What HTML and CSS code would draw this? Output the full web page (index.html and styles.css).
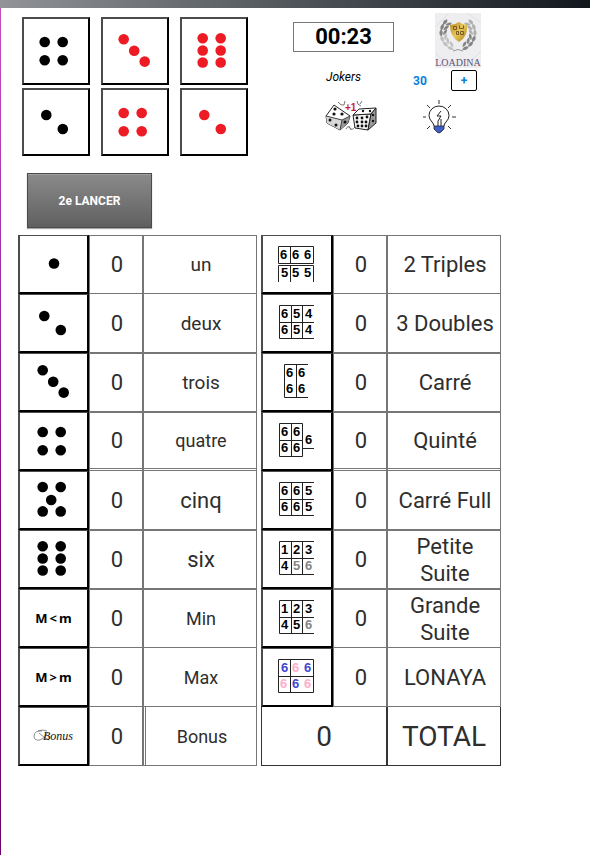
FILE: index.html
```html
<!DOCTYPE html>
<html lang="fr">
<head>
<meta charset="utf-8">
<meta name="viewport" content="width=device-width, initial-scale=1">
<title>Lonaya</title>
<link rel="stylesheet" href="styles.css">
</head>
<body>
<svg class="defs" aria-hidden="true">
  <defs>
    <symbol id="p1" viewBox="-20 -20 40 40"><circle cx="0" cy="-.5" r="5.3"/></symbol>
    <symbol id="p2" viewBox="-20 -20 40 40"><circle cx="-9.7" cy="-7" r="5.3"/><circle cx="6.8" cy="7" r="5.3"/></symbol>
    <symbol id="p3" viewBox="-20 -20 40 40"><circle cx="-11.3" cy="-11.7" r="5.3"/><circle cx="-.8" cy="-.2" r="5.3"/><circle cx="9.7" cy="10.6" r="5.3"/></symbol>
    <symbol id="p4" viewBox="-20 -20 40 40"><circle cx="-11.3" cy="-9" r="5.3"/><circle cx="6.7" cy="-9" r="5.3"/><circle cx="-11.3" cy="9.2" r="5.3"/><circle cx="6.7" cy="9.2" r="5.3"/></symbol>
    <symbol id="p5" viewBox="-20 -20 40 40"><circle cx="-11.3" cy="-13" r="5.3"/><circle cx="6.7" cy="-13" r="5.3"/><circle cx="-2.8" cy="0" r="5.3"/><circle cx="-11.3" cy="11.4" r="5.3"/><circle cx="6.7" cy="11.4" r="5.3"/></symbol>
    <symbol id="p6" viewBox="-20 -20 40 40"><circle cx="-11.3" cy="-12.7" r="5.3"/><circle cx="6.7" cy="-12.7" r="5.3"/><circle cx="-11.3" cy="-.5" r="5.3"/><circle cx="6.7" cy="-.5" r="5.3"/><circle cx="-11.3" cy="11.5" r="5.3"/><circle cx="6.7" cy="11.5" r="5.3"/></symbol>
    <symbol id="grid" viewBox="0 0 36 36"><path fill="none" stroke="#222" d="M36 .5H1.5V33.5H36M1.5 17.5H36M13.5 .5V33.5M24.5 .5V33.5"/></symbol>
    <g id="leaves"><path d="M23 37q-4-4-7-1q3 4 7 1zM22 35q-1-5-5-5q0 4 5 5z"/></g>
    <linearGradient id="gold" x1="0" x2="1" y1="0" y2="1"><stop offset="0" stop-color="#b8861e"/><stop offset=".5" stop-color="#e8c85e"/><stop offset="1" stop-color="#a87a14"/></linearGradient>
  </defs>
</svg>

<div class="topbar"></div>
<main class="page">
  <header class="head">
    <div class="dice">
      <button class="die" aria-label="Dé 4"><svg class="pips"><use href="#p4"/></svg></button>
      <button class="die red" aria-label="Dé 3"><svg class="pips"><use href="#p3"/></svg></button>
      <button class="die red" aria-label="Dé 6"><svg class="pips"><use href="#p6"/></svg></button>
      <button class="die" aria-label="Dé 2"><svg class="pips"><use href="#p2"/></svg></button>
      <button class="die red" aria-label="Dé 4"><svg class="pips"><use href="#p4"/></svg></button>
      <button class="die red" aria-label="Dé 2"><svg class="pips"><use href="#p2"/></svg></button>
    </div>

    <div class="info">
      <div class="timer">00:23</div>
      <svg class="logo" viewBox="0 0 46 55" role="img" aria-label="Loadina">
        <rect width="46" height="55" fill="#eeeef0"/>
        <path d="M0 14L14 0M32 0L46 10M0 40L10 48M36 48L46 38" stroke="#e0e0e4" fill="none"/>
        <g fill="#c0c0c0">
          <use href="#leaves" transform="rotate(14 23 20)"/><use href="#leaves" transform="rotate(36 23 20)"/><use href="#leaves" transform="rotate(57 23 20)"/>
          <g fill="#848484"><use href="#leaves" transform="rotate(78 23 20)"/><use href="#leaves" transform="rotate(98 23 20)"/><use href="#leaves" transform="rotate(118 23 20)"/></g>
        </g>
        <g transform="matrix(-1 0 0 1 46 0)" fill="#858585">
          <use href="#leaves" transform="rotate(14 23 20)"/><use href="#leaves" transform="rotate(36 23 20)"/><use href="#leaves" transform="rotate(57 23 20)"/>
          <g fill="#b0b0b0"><use href="#leaves" transform="rotate(78 23 20)"/><use href="#leaves" transform="rotate(98 23 20)"/><use href="#leaves" transform="rotate(118 23 20)"/></g>
        </g>
        <path d="M18 38q5-3 10 0" fill="none" stroke="#999"/>
        <path d="M15 12q5 0 9-3q4 3 8 3q1 12-8 17q-9-5-9-17z" fill="url(#gold)"/>
        <path d="M18.500 13.500h3v3h-3zM24.500 12.500v3h4v-3M21.500 18.500h2v3h-2zM25.500 18.500h3v3h-3z" fill="none" stroke="#7a5c20"/>
        <text class="logo-text" x="23" y="53" text-anchor="middle">LOADINA</text>
      </svg>
      <div class="jokers">Jokers</div>
      <div class="credit">
        <span class="count">30</span>
        <button class="plus">+</button>
      </div>
      <button class="tool tool-dice" aria-label="Joker dés">
        <svg width="52" height="34" viewBox="0 0 52 34">
          <g fill="none" stroke="#777"><path d="M13 2q3 4 6 3l1-4M32 1q0 4 4 5M37 1l-2 3M21 29q2-4 4-1t5-1M24 26l2 4"/></g>
          <path d="M1 16L9 5 25 16 23 23 15 30 2 23z" fill="#fff" stroke="#222" stroke-linejoin="round"/>
          <path d="M25 16L23 23 15 30 17 20z" fill="#999"/>
          <path d="M1 16L17 20 15 30 2 23z" fill="#d8d8d8"/>
          <path d="M1 16L17 20 25 16M17 20L15 30" fill="none" stroke="#444"/>
          <g fill="#111"><circle cx="10" cy="9" r="1.6"/><circle cx="17" cy="14" r="1.6"/><circle cx="9" cy="14" r="1.6"/><circle cx="5" cy="20" r="1.5"/><circle cx="11" cy="25" r="1.5"/><circle cx="20" cy="22" r="1.500"/></g>
          <path d="M28 15L46 14 43 30 30 28z" fill="#f5f5f5" stroke="#222"/>
          <path d="M28 15L34 9 51 8 46 14z" fill="#fff" stroke="#222"/>
          <path d="M46 14L51 8 51 23 43 30z" fill="#999" stroke="#222"/>
          <g fill="#111"><circle cx="32" cy="18" r="1.400"/><circle cx="37" cy="18" r="1.400"/><circle cx="42" cy="17" r="1.400"/><circle cx="32" cy="22" r="1.400"/><circle cx="37" cy="22" r="1.400"/><circle cx="41" cy="22" r="1.400"/><circle cx="33" cy="26" r="1.400"/><circle cx="37" cy="26" r="1.400"/><circle cx="41" cy="26" r="1.400"/><circle cx="48" cy="15" r="1.200"/><circle cx="48" cy="21" r="1.200"/><circle cx="38" cy="11" r="1.200"/><circle cx="45" cy="11" r="1.200"/></g>
          <text class="bonus-one" x="20" y="11">+1</text>
        </svg>
      </button>
      <button class="tool tool-bulb" aria-label="Indice">
        <svg width="33" height="34" viewBox="0 0 33 34">
          <path d="M11 26q0-2-2-4Q6 19 6 15.500a10 9.500 0 0 1 20 0Q26 19 23 22q-2 2-2 4" fill="#fff" stroke="#222"/>
          <path d="M16 0v4M4 5l3 3M28 5l-3 3M0 17h3M29 17h4M4 29l3-3M28 29l-3-3" stroke="#333" fill="none"/>
          <path d="M18 11l-4 5h4l-3 5M15 21v5M18 19v7" stroke="#222" fill="none"/>
          <path d="M11 26h10v3l-3 3q-2 2-4 0l-3-3z" fill="#3f5fc4" stroke="#223" stroke-width=".8"/>
        </svg>
      </button>
    </div>
  </header>

  <button class="roll">2e LANCER</button>

  <section class="board">
    <table class="scores">
      <colgroup><col class="c-pic"><col class="c-val"><col></colgroup>
      <tr><th class="pic"><svg class="pips"><use href="#p1"/></svg></th><td>0</td><td class="medium">un</td></tr>
      <tr class="thin"><th class="pic"><svg class="pips"><use href="#p2"/></svg></th><td>0</td><td class="medium">deux</td></tr>
      <tr><th class="pic"><svg class="pips"><use href="#p3"/></svg></th><td>0</td><td class="medium">trois</td></tr>
      <tr class="split"><th class="pic"><svg class="pips"><use href="#p4"/></svg></th><td>0</td><td class="small">quatre</td></tr>
      <tr class="thin"><th class="pic"><svg class="pips"><use href="#p5"/></svg></th><td>0</td><td>cinq</td></tr>
      <tr><th class="pic"><svg class="pips"><use href="#p6"/></svg></th><td>0</td><td>six</td></tr>
      <tr><th class="pic"><span class="rule"><span>M</span><span>&lt;</span><span>m</span></span></th><td>0</td><td class="small">Min</td></tr>
      <tr class="thin"><th class="pic"><span class="rule"><span>M</span><span>&gt;</span><span>m</span></span></th><td>0</td><td class="small">Max</td></tr>
      <tr class="thin"><th class="pic"><svg width="42" height="16" viewBox="0 0 42 16"><path d="M9 3Q2 2 1 8Q1 13 7 12Q12 11 15 4M6 5Q10 9 16 12M5 3Q9 1 14 3" fill="none" stroke="#444" stroke-width=".6"/><text class="script" x="10" y="12">Bonus</text></svg></th><td>0</td><td class="small divide">Bonus</td></tr>
    </table>

    <table class="scores">
      <colgroup><col class="c-pic wide"><col class="c-val"><col></colgroup>
      <tr><th class="pic"><svg class="combo" viewBox="0 0 36 36"><path d="M.5 .5H35.500V17.500H.5zM12.500 .5V17.500M.5 36V19.500H35.500V36M12.500 19.500V36"/><text x="2" y="13">6</text><text x="14" y="13">6</text><text x="26" y="13">6</text><text x="3" y="31">5</text><text x="14" y="31">5</text><text x="26" y="31">5</text></svg></th><td>0</td><td>2 Triples</td></tr>
      <tr class="thin"><th class="pic"><svg class="combo" viewBox="0 0 36 36"><use href="#grid"/><text x="3" y="13">6</text><text x="15" y="13">5</text><text x="27" y="13">4</text><text x="3" y="29">6</text><text x="15" y="29">5</text><text x="27" y="29">4</text></svg></th><td>0</td><td>3 Doubles</td></tr>
      <tr><th class="pic"><svg class="combo" viewBox="0 0 36 36"><path d="M30 .5H6.500V33.500H30M18.500 .5V33.500"/><text x="8" y="13">6</text><text x="20" y="13">6</text><text x="8" y="29">6</text><text x="20" y="29">6</text></svg></th><td>0</td><td>Carré</td></tr>
      <tr class="split"><th class="pic"><svg class="combo" viewBox="0 0 36 36"><path d="M1.500 .5H24.500V33.500H1.500zM1.500 17.500H24.500M13.500 .5V33.500M24.500 25.500H36"/><text x="3" y="13">6</text><text x="15" y="13">6</text><text x="3" y="29">6</text><text x="15" y="29">6</text><text x="27" y="21">6</text></svg></th><td>0</td><td>Quinté</td></tr>
      <tr class="thin"><th class="pic"><svg class="combo" viewBox="0 0 36 36"><use href="#grid"/><text x="3" y="13">6</text><text x="15" y="13">6</text><text x="27" y="13">5</text><text x="3" y="29">6</text><text x="15" y="29">6</text><text x="27" y="29">5</text></svg></th><td>0</td><td>Carré Full</td></tr>
      <tr><th class="pic"><svg class="combo" viewBox="0 0 36 36"><use href="#grid"/><text x="3" y="13">1</text><text x="15" y="13">2</text><text x="27" y="13">3</text><text x="3" y="29">4</text><text class="dim" x="15" y="29">5</text><text class="dim" x="27" y="29">6</text></svg></th><td>0</td><td>Petite<br>Suite</td></tr>
      <tr><th class="pic"><svg class="combo" viewBox="0 0 36 36"><use href="#grid"/><text x="3" y="13">1</text><text x="15" y="13">2</text><text x="27" y="13">3</text><text x="3" y="29">4</text><text x="15" y="29">5</text><text class="dim" x="27" y="29">6</text></svg></th><td>0</td><td>Grande<br>Suite</td></tr>
      <tr class="thin"><th class="pic"><svg class="combo" viewBox="0 0 36 36"><path d="M.5 .5H35.500V33.500H.5zM.5 17.500H35.500M12.500 .5V33.500"/><text class="blue" x="3" y="13">6</text><text class="pink" x="14" y="13">6</text><text class="blue" x="26" y="13">6</text><text class="pink" x="2" y="29">6</text><text class="blue" x="14" y="29">6</text><text class="pink" x="26" y="29">6</text></svg></th><td>0</td><td>LONAYA</td></tr>
      <tr class="thin total"><td colspan="2">0</td><td>TOTAL</td></tr>
    </table>
  </section>
</main>
</body>
</html>
```
FILE: styles.css
```css
* { box-sizing: border-box; }

body {
  margin: 0;
  min-height: 100vh;
  display: flex;
  flex-direction: column;
  background: #fff;
  color: #2e2e2e;
  font-family: Roboto, "Liberation Sans", sans-serif;
}

button {
  margin: 0;
  padding: 0;
  font-family: inherit;
  cursor: pointer;
}

svg { display: block; }

.defs { position: absolute; width: 0; height: 0; }

.topbar {
  height: 8px;
  background: linear-gradient(90deg, #919398, #565b60 45%, #12161d);
}

.page {
  flex: 1;
  padding: 5px 0 16px 17px;
  border-left: 1px solid;
  border-image: linear-gradient(#c050c0, #a030a8 30%, #780878 65%, #6c046c) 1;
}

.head {
  display: flex;
  align-items: flex-start;
  gap: 45px;
}

.dice {
  display: grid;
  grid-template-columns: repeat(3, 68px);
  gap: 3px 11px;
  padding: 4px 0 0 4px;
}

.die {
  display: grid;
  place-items: center;
  height: 68px;
  background: #fff;
  border: 2px solid #000;
  border-top-color: #4c4c4c;
  border-left-color: #4c4c4c;
}

.pips {
  width: 40px;
  height: 40px;
  margin: 0 auto;
  fill: #000;
}

.red .pips { fill: #ed1c24; }

.info {
  display: grid;
  grid-template-columns: 101px 71px;
  grid-template-rows: 55px 25px auto;
  column-gap: 16px;
}

.timer {
  align-self: center;
  height: 30px;
  margin-bottom: 7px;
  border: 1px solid #767676;
  color: #000;
  font-size: 22px;
  font-weight: 700;
  line-height: 28px;
  text-align: center;
}

.logo {
  width: 46px;
  height: 55px;
  justify-self: end;
}

.logo-text {
  font: 10px "Liberation Serif", serif;
  fill: #5c5478;
}

.jokers {
  color: #000;
  font-size: 12px;
  font-style: italic;
  line-height: 18px;
  text-align: center;
}

.credit {
  display: flex;
  justify-content: space-between;
  align-items: center;
  padding: 0 4px 0 3px;
}

.count, .plus {
  color: #0a7fd9;
  font-size: 12px;
  font-weight: 700;
}

.plus {
  width: 26px;
  height: 21px;
  background: #fff;
  border: 1px solid #000;
  border-radius: 2px;
}

.tool {
  margin-top: 7px;
  border: 0;
  background: none;
}

.tool-dice { justify-self: end; margin-right: 17px; }
.tool-bulb { justify-self: start; margin-left: 13px; }

.bonus-one {
  font: 700 10px "Liberation Sans", sans-serif;
  fill: #c8202c;
}

.roll {
  display: block;
  width: 125px;
  height: 55px;
  margin: 17px 0 7px 9px;
  border: 1px solid #4a4a4a;
  background: linear-gradient(#8a8a8a, #606060);
  box-shadow: inset 0 1px #a0a0a0, 0 1px 1px #aaa;
  color: #fff;
  font-size: 12px;
  font-weight: 700;
}

.board {
  display: grid;
  grid-template-columns: minmax(0, 239px) minmax(0, 240px);
  align-items: start;
  gap: 4px;
}

.scores {
  width: 100%;
  table-layout: fixed;
  border-collapse: separate;
  border-spacing: 0;
}

.c-pic { width: 71px; }
.c-pic.wide { width: 72px; }
.c-val { width: 54px; }

.scores td, .scores th {
  height: 59px;
  padding: 0;
  border: 1px solid #767676;
  font-size: 22px;
  line-height: 27px;
  text-align: center;
  vertical-align: middle;
}

.scores td { padding-left: 2px; }
.scores .medium { font-size: 19px; }
.scores .small { font-size: 18px; }
.scores .thin td { border-top: 0; }
.scores .split td { border-bottom: 3px double #767676; }
.scores .divide { border-left: 3px double #767676; }

.scores .pic {
  border-style: solid;
  border-width: 1px 2px 2px 2px;
  border-color: #4c4c4c #000 #000 #4c4c4c;
}

.scores .total td {
  padding: 0;
  border-color: #333;
  font-size: 28px;
}

.rule {
  display: flex;
  justify-content: center;
  gap: 2px;
  color: #000;
  font: 700 13px "Noto Sans", sans-serif;
}

.scores .pic > svg { margin: 0 auto; }
.scores .pic:has(.combo) { padding-right: 2px; }

.script {
  font: italic 12px "Liberation Serif", serif;
  fill: #111;
}

.combo {
  width: 36px;
  height: 36px;
}

.combo path {
  fill: none;
  stroke: #222;
}

.combo text {
  font: 700 13px "Liberation Sans", sans-serif;
  fill: #000;
}

.combo .dim { fill: #858585; }
.combo .blue { fill: #3f48cc; }
.combo .pink { fill: #ffaec9; }
```
